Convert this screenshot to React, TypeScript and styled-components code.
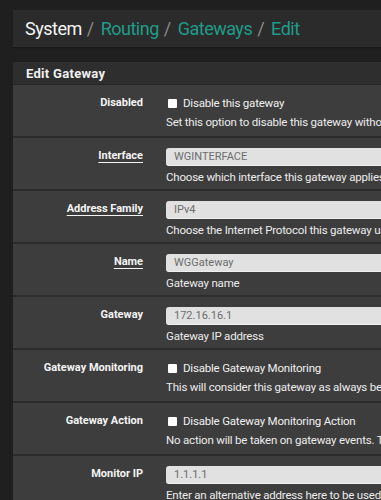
import styled, { createGlobalStyle } from "styled-components";

const GlobalStyle = createGlobalStyle`
  html, body {
    margin: 0;
    padding: 0;
    background: #1f1f1f;
    overflow: hidden;
    font-family: Roboto, "Liberation Sans", Arial, sans-serif;
  }
`;

const Page = styled.div`
  width: 700px;
  padding: 10px 0 0 13px;
  display: flex;
  flex-direction: column;
  gap: 15px;
`;

const Breadcrumb = styled.div`
  height: 37px;
  background: #2b2b2b;
  box-shadow: 0 1px 1px #181818;
  display: flex;
  align-items: center;
  padding-left: 12px;
  font-size: 18px;
  letter-spacing: -0.5px;
`;

const Crumb = styled.span<{ $current?: boolean }>`
  color: ${({ $current }) => ($current ? "#f4f4f4" : "#1f9c89")};
`;

const Slash = styled.span`
  color: #8a8a8a;
  margin: 0 7px 0 5px;
`;

const Panel = styled.div`
  display: flex;
  flex-direction: column;
  background: #3d3d3d;
`;

const PanelHeading = styled.div`
  height: 22px;
  background: #2e2e2e;
  border-bottom: 1px solid #262626;
  display: flex;
  align-items: center;
  padding-left: 13px;
  font-size: 13px;
  font-weight: 700;
  letter-spacing: 0.3px;
  color: #f0f0f0;
`;

const Row = styled.div`
  display: grid;
  grid-template-columns: 140px 1fr;
  height: 51px;
  border-bottom: 2px solid #2c2c2c;
  box-sizing: content-box;
`;

const Label = styled.div<{ $link?: boolean }>`
  text-align: right;
  padding: 10px 10px 0 0;
  font-size: 11px;
  line-height: 16px;
  font-weight: 700;
  color: #f4f4f4;
  span {
    text-decoration: ${({ $link }) => ($link ? "underline" : "none")};
    text-underline-offset: 3px;
    text-decoration-thickness: 1px;
  }
`;

const Field = styled.div`
  padding: 10px 0 0 13px;
  display: flex;
  flex-direction: column;
  gap: 4px;
`;

const CheckLine = styled.label`
  display: flex;
  align-items: center;
  gap: 6px;
  height: 16px;
  padding-left: 2px;
  font-size: 11.5px;
  letter-spacing: -0.2px;
  color: #f0f0f0;
`;

const Box = styled.span`
  width: 9px;
  height: 9px;
  background: #ffffff;
  border-radius: 1px;
`;

const Input = styled.div`
  height: 18px;
  width: 520px;
  background: #e1e1e1;
  border-radius: 3px;
  border-bottom: 1px solid #f0f0f0;
  box-sizing: border-box;
  display: flex;
  align-items: center;
  padding-left: 8px;
  font-size: 11px;
  color: #6d6d6d;
`;

const Help = styled.div`
  font-size: 11.5px;
  letter-spacing: -0.2px;
  line-height: 15px;
  color: #ececec;
  white-space: nowrap;
`;

type Item =
  | { label: string; link?: boolean; check: string; help: string }
  | { label: string; link?: boolean; value: string; help: string };

const items: Item[] = [
  { label: "Disabled", check: "Disable this gateway", help: "Set this option to disable this gateway without removing it from the list." },
  { label: "Interface", link: true, value: "WGINTERFACE", help: "Choose which interface this gateway applies to." },
  { label: "Address Family", link: true, value: "IPv4", help: "Choose the Internet Protocol this gateway uses." },
  { label: "Name", link: true, value: "WGGateway", help: "Gateway name" },
  { label: "Gateway", value: "172.16.16.1", help: "Gateway IP address" },
  { label: "Gateway Monitoring", check: "Disable Gateway Monitoring", help: "This will consider this gateway as always being up." },
  { label: "Gateway Action", check: "Disable Gateway Monitoring Action", help: "No action will be taken on gateway events. The gateway is always considered up." },
  { label: "Monitor IP", value: "1.1.1.1", help: "Enter an alternative address here to be used to monitor the link." },
];

export default function App() {
  return (
    <>
      <GlobalStyle />
      <Page>
        <Breadcrumb>
          <Crumb $current>System</Crumb>
          <Slash>/</Slash>
          <Crumb>Routing</Crumb>
          <Slash>/</Slash>
          <Crumb>Gateways</Crumb>
          <Slash>/</Slash>
          <Crumb>Edit</Crumb>
        </Breadcrumb>
        <Panel>
          <PanelHeading>Edit Gateway</PanelHeading>
          {items.map((it) => (
            <Row key={it.label}>
              <Label $link={it.link}>
                <span>{it.label}</span>
              </Label>
              <Field>
                {"check" in it ? (
                  <CheckLine>
                    <Box />
                    {it.check}
                  </CheckLine>
                ) : (
                  <Input>{it.value}</Input>
                )}
                <Help>{it.help}</Help>
              </Field>
            </Row>
          ))}
        </Panel>
      </Page>
    </>
  );
}
